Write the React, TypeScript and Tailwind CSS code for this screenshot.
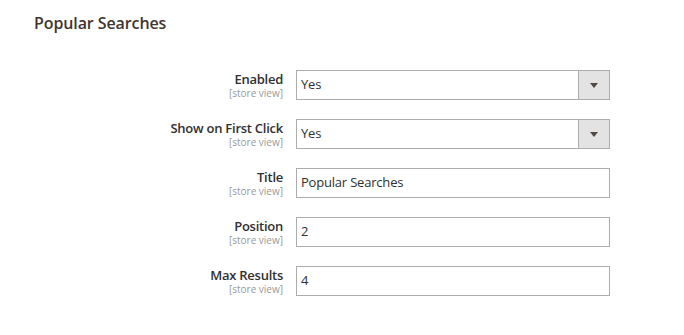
import React from 'react';

const fields = [
  { label: 'Enabled', type: 'select', value: 'Yes' },
  { label: 'Show on First Click', type: 'select', value: 'Yes' },
  { label: 'Title', type: 'text', value: 'Popular Searches' },
  { label: 'Position', type: 'text', value: '2' },
  { label: 'Max Results', type: 'text', value: '4' },
];

function Field({ type, value }: { type: string; value: string }) {
  if (type === 'select') {
    return (
      <div className="flex h-[30px] w-[314px] border border-[#adadad] bg-white">
        <div className="flex flex-1 items-center pl-[4px] text-[13px] tracking-[-0.2px] text-[#303030]">{value}</div>
        <div className="flex w-[31px] items-center justify-center border-l border-[#adadad] bg-[#e3e3e3]">
          <svg width="8" height="5" viewBox="0 0 8 5">
            <path d="M0 0h8L4 5z" fill="#514943" />
          </svg>
        </div>
      </div>
    );
  }
  return (
    <div className="flex h-[30px] w-[314px] items-center border border-[#adadad] bg-white pl-[4px] text-[13px] tracking-[-0.2px] text-[#303030]">
      {value}
    </div>
  );
}

export default function App() {
  return (
    <div className="h-[335px] w-[684px] bg-white font-['Open_Sans',sans-serif]">
      <div className="px-[34px] pt-[11px] text-[16px] font-semibold tracking-[-0.1px] text-[#41362f]">Popular Searches</div>
      <div className="mt-[35px] flex flex-col gap-[19px]">
        {fields.map((f) => (
          <div key={f.label} className="flex h-[30px]">
            <div className="flex w-[283px] flex-col items-end pt-[2px]">
              <span className="text-[13px] leading-[15px] font-semibold tracking-[-0.25px] text-[#303030]">{f.label}</span>
              <span className="text-[10px] leading-[12px] text-[#999]">[store view]</span>
            </div>
            <div className="ml-[13px]">
              <Field type={f.type} value={f.value} />
            </div>
          </div>
        ))}
      </div>
    </div>
  );
}
